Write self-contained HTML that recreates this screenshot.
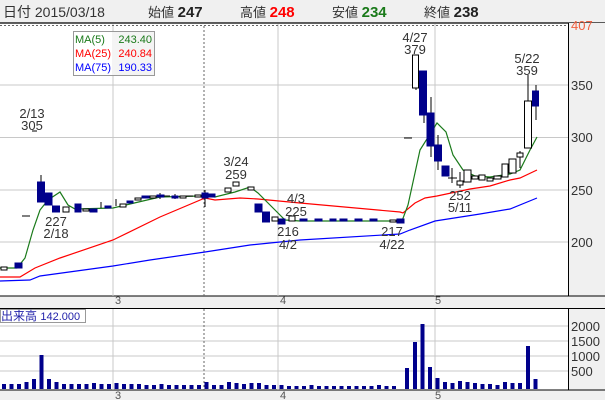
<!DOCTYPE html>
<html><head><meta charset="utf-8"><style>
body{margin:0;width:605px;height:400px;overflow:hidden;background:#fff;font-family:"Liberation Sans","Noto Sans CJK JP",sans-serif}
svg text{font-family:"Liberation Sans","Noto Sans CJK JP",sans-serif}
</style></head><body>
<svg width="605" height="400" xmlns="http://www.w3.org/2000/svg">
<rect x="0" y="0" width="605" height="23" fill="#f0f0f0"/>
<line x1="0" y1="23" x2="605" y2="23" stroke="#000" stroke-width="1.2"/>
<text x="3" y="17" font-size="14" fill="#333">日付 2015/03/18</text>
<text x="148" y="17" font-size="13" fill="#333">始値 <tspan font-weight="bold" font-size="15" fill="#222">247</tspan></text>
<text x="240" y="17" font-size="13" fill="#333">高値 <tspan font-weight="bold" font-size="15" fill="#f00">248</tspan></text>
<text x="332" y="17" font-size="13" fill="#333">安値 <tspan font-weight="bold" font-size="15" fill="#1a7a1a">234</tspan></text>
<text x="424" y="17" font-size="13" fill="#333">終値 <tspan font-weight="bold" font-size="15" fill="#222">238</tspan></text>
<rect x="569" y="23" width="36" height="377" fill="#f0f0f0"/>
<line x1="568.5" y1="23" x2="568.5" y2="390" stroke="#000"/>
<rect x="0" y="296" width="605" height="13" fill="#f0f0f0"/>
<line x1="0" y1="296" x2="605" y2="296" stroke="#000"/>
<line x1="0" y1="308.5" x2="605" y2="308.5" stroke="#000"/>
<rect x="0" y="390" width="605" height="10" fill="#f0f0f0"/>
<line x1="0" y1="390" x2="605" y2="390" stroke="#000"/>
<g font-size="11" fill="#555"><text x="115" y="304">3</text><text x="280" y="304">4</text><text x="435" y="304">5</text>
<text x="115" y="399">3</text><text x="280" y="399">4</text><text x="435" y="399">5</text></g>
<g stroke="#c8c8c8" stroke-width="1">
<line x1="0" y1="85" x2="568" y2="85"/><line x1="0" y1="137.5" x2="568" y2="137.5"/><line x1="0" y1="190" x2="568" y2="190"/><line x1="0" y1="242" x2="568" y2="242"/>
<line x1="113" y1="24" x2="113" y2="296"/><line x1="278" y1="24" x2="278" y2="296"/><line x1="435" y1="24" x2="435" y2="296"/>
<line x1="113" y1="309" x2="113" y2="390"/><line x1="278" y1="309" x2="278" y2="390"/><line x1="435" y1="309" x2="435" y2="390"/>
<line x1="0" y1="326" x2="568" y2="326"/><line x1="0" y1="341" x2="568" y2="341"/><line x1="0" y1="356" x2="568" y2="356"/><line x1="0" y1="371" x2="568" y2="371"/>
</g>
<g stroke="#666" stroke-dasharray="2,2"><line x1="0" y1="25.5" x2="568" y2="25.5"/><line x1="204" y1="26" x2="204" y2="296"/><line x1="204" y1="309" x2="204" y2="390"/></g>
<g font-size="13" fill="#333"><text x="571" y="30" fill="#f06040">407</text><text x="571" y="90">350</text><text x="571" y="142">300</text><text x="571" y="195">250</text><text x="571" y="247">200</text>
<text x="571" y="331">2000</text><text x="571" y="346">1500</text><text x="571" y="361">1000</text><text x="571" y="376">500</text></g>
<polyline fill="none" stroke="#00f" stroke-width="1.2" points="0,281 30,280 40,276 113,266 150,260 205,252 250,245 280,242 300,240 400,234 410,230 435,221 480,214 510,209 537,198"/>
<polyline fill="none" stroke="#f00" stroke-width="1.2" points="0,277 20,277 35,268 60,258 113,240 160,217 205,198 215,200 240,198 258,199 300,203 400,212 403,213 415,203 425,198 437,196 470,189 490,186 510,180 520,178 537,170"/>
<polyline fill="none" stroke="#1a7a1a" stroke-width="1.2" points="0,268 17,268 25,258 33,230 40,210 48,200 60,192 68,205 75,209 113,208 130,204 160,197 200,196 215,197 235,192 250,187 258,193 275,210 285,220 300,221 402,221 408,205 420,150 437,123 446,132 453,155 463,170 475,176 490,177 510,174 520,170 530,150 537,137"/>
<g stroke="#000" stroke-width="1">
<line x1="41" y1="175" x2="41" y2="202"/><line x1="205" y1="190" x2="205" y2="207"/><line x1="424" y1="71" x2="424" y2="123"/><line x1="431" y1="97" x2="431" y2="157"/><line x1="438" y1="135" x2="438" y2="170"/><line x1="452" y1="168" x2="452" y2="183"/><line x1="460" y1="172" x2="460" y2="188"/><line x1="520" y1="151" x2="520" y2="168"/><line x1="528" y1="75" x2="528" y2="148"/><line x1="536" y1="85" x2="536" y2="120"/><line x1="416" y1="55" x2="416" y2="90"/>
<line x1="101" y1="202" x2="101" y2="208"/><line x1="116" y1="199" x2="116" y2="206"/><line x1="160" y1="193" x2="160" y2="199"/><line x1="175" y1="194" x2="175" y2="199"/>
</g>
<g fill="#00008b" stroke="#00008b">
<rect x="15" y="263" width="7" height="5"/><rect x="37.5" y="182" width="7" height="20"/><rect x="45" y="193" width="7" height="12"/><rect x="52.5" y="206" width="7" height="6"/><rect x="75" y="204" width="6" height="8"/><rect x="90" y="209" width="7" height="3"/>
<rect x="202" y="193" width="6" height="5"/><rect x="209" y="194" width="6" height="3"/><rect x="255" y="204" width="7" height="8"/><rect x="262.5" y="212" width="7" height="10"/><rect x="278" y="219" width="7" height="5"/>
<rect x="397" y="219" width="7" height="4"/><rect x="419.5" y="71" width="7" height="44"/><rect x="427" y="113" width="7" height="33"/><rect x="434.5" y="145" width="7" height="16"/><rect x="442" y="166" width="7" height="10"/><rect x="532.5" y="91" width="6" height="15"/>
<rect x="105" y="206" width="6" height="2"/><rect x="127" y="201" width="6" height="2"/><rect x="142" y="196" width="7" height="2"/><rect x="157" y="195" width="7" height="2"/><rect x="172" y="196" width="6" height="2"/><rect x="300" y="219" width="7" height="2"/><rect x="315" y="219" width="7" height="2"/><rect x="340" y="219" width="7" height="2"/><rect x="355" y="219" width="7" height="2"/><rect x="370" y="219" width="7" height="2"/><rect x="330" y="219" width="6" height="2"/>
</g>
<g fill="#fff" stroke="#000">
<rect x="1" y="267" width="6" height="3"/><rect x="63" y="207" width="6" height="5"/><rect x="83" y="209" width="6" height="2"/><rect x="120" y="204" width="6" height="3"/><rect x="135" y="198" width="6" height="2"/><rect x="150" y="196" width="6" height="2"/><rect x="180" y="196" width="6" height="2"/><rect x="195" y="195" width="6" height="2"/><rect x="225" y="188" width="6" height="4"/><rect x="233" y="182" width="6" height="4"/><rect x="248" y="187" width="6" height="3"/><rect x="272" y="217" width="6" height="4"/><rect x="289" y="216" width="6" height="5"/><rect x="390" y="220" width="6" height="2"/>
<rect x="412.5" y="55" width="6" height="33"/><rect x="457" y="181" width="6" height="4"/><rect x="464" y="170" width="7" height="12"/><rect x="472" y="176" width="6" height="3"/><rect x="479" y="175" width="6" height="5"/><rect x="487" y="178" width="6" height="3"/><rect x="494" y="176" width="7" height="3"/><rect x="502" y="164" width="6" height="13"/><rect x="509" y="159" width="7" height="14"/><rect x="517" y="153" width="6" height="4"/><rect x="524.5" y="101" width="7" height="47"/>
</g>
<g stroke="#000"><line x1="404" y1="138" x2="412" y2="138"/><line x1="22" y1="216" x2="30" y2="216"/><line x1="32" y1="131" x2="37" y2="131"/><line x1="448" y1="178" x2="457" y2="178"/><line x1="186" y1="196" x2="193" y2="196"/><line x1="164" y1="196" x2="170" y2="196"/></g>
<g font-size="13" fill="#333" text-anchor="middle">
<text x="32" y="118">2/13</text><text x="32" y="130">305</text>
<text x="56" y="226">227</text><text x="56" y="238">2/18</text>
<text x="236" y="166">3/24</text><text x="236" y="179">259</text>
<text x="296" y="203">4/3</text><text x="296" y="216">225</text>
<text x="288" y="236">216</text><text x="288" y="249">4/2</text>
<text x="392" y="236">217</text><text x="392" y="249">4/22</text>
<text x="415" y="42">4/27</text><text x="415" y="54">379</text>
<text x="527" y="63">5/22</text><text x="527" y="75">359</text>
<text x="460" y="200">252</text><text x="460" y="212">5/11</text>
</g>
<rect x="73.5" y="31.5" width="81" height="44" fill="#f4f4f4" stroke="#999"/>
<rect x="74" y="32" width="38" height="43" fill="#fff"/>
<g font-size="11"><text x="75" y="43" fill="#1a7a1a">MA(5)</text><text x="152" y="43" fill="#1a7a1a" text-anchor="end">243.40</text>
<text x="75" y="57" fill="#f00">MA(25)</text><text x="152" y="57" fill="#f00" text-anchor="end">240.84</text>
<text x="75" y="71" fill="#00f">MA(75)</text><text x="152" y="71" fill="#00f" text-anchor="end">190.33</text></g>
<rect x="0.5" y="309.5" width="85" height="13" fill="#fff" stroke="#999"/>
<text x="1" y="320" font-size="12" fill="#22a">出来高 <tspan font-size="11">142.000</tspan></text>
<g fill="#00008b">
<rect x="2" y="384" width="4" height="5"/><rect x="9.5" y="384" width="4" height="5"/><rect x="17" y="384" width="4" height="5"/><rect x="24.5" y="382" width="4" height="7"/><rect x="32" y="379" width="4" height="10"/><rect x="39.5" y="355" width="4" height="34"/><rect x="47" y="379" width="4" height="10"/><rect x="54.5" y="382" width="4" height="7"/><rect x="62" y="384" width="4" height="5"/><rect x="69.5" y="384" width="4" height="5"/><rect x="77" y="384" width="4" height="5"/><rect x="84.5" y="384" width="4" height="5"/><rect x="92" y="383" width="4" height="6"/><rect x="99.5" y="384" width="4" height="5"/><rect x="107" y="384" width="4" height="5"/><rect x="114.5" y="383" width="4" height="6"/><rect x="122" y="384" width="4" height="5"/><rect x="129.5" y="384" width="4" height="5"/><rect x="137" y="384" width="4" height="5"/><rect x="144.5" y="385" width="4" height="4"/><rect x="152" y="385" width="4" height="4"/><rect x="159.5" y="384" width="4" height="5"/><rect x="167" y="385" width="4" height="4"/><rect x="174.5" y="385" width="4" height="4"/><rect x="182" y="385" width="4" height="4"/><rect x="189.5" y="385" width="4" height="4"/><rect x="197" y="385" width="4" height="4"/><rect x="204.5" y="382" width="4" height="7"/><rect x="212" y="385" width="4" height="4"/><rect x="219.5" y="385" width="4" height="4"/><rect x="227" y="382" width="4" height="7"/><rect x="234.5" y="383" width="4" height="6"/><rect x="242" y="384" width="4" height="5"/><rect x="249.5" y="383" width="4" height="6"/><rect x="257" y="383" width="4" height="6"/><rect x="264.5" y="385" width="4" height="4"/><rect x="272" y="385" width="4" height="4"/><rect x="279.5" y="385" width="4" height="4"/><rect x="287" y="386" width="4" height="3"/><rect x="294.5" y="386" width="4" height="3"/><rect x="302" y="386" width="4" height="3"/><rect x="309.5" y="385" width="4" height="4"/><rect x="317" y="386" width="4" height="3"/><rect x="324.5" y="386" width="4" height="3"/><rect x="332" y="386" width="4" height="3"/><rect x="339.5" y="386" width="4" height="3"/><rect x="347" y="386" width="4" height="3"/><rect x="354.5" y="386" width="4" height="3"/><rect x="362" y="386" width="4" height="3"/><rect x="369.5" y="386" width="4" height="3"/><rect x="377" y="385" width="4" height="4"/><rect x="384.5" y="386" width="4" height="3"/><rect x="392" y="386" width="4" height="3"/>
<rect x="405" y="368" width="4" height="21"/><rect x="413" y="342" width="4" height="47"/><rect x="420.5" y="324" width="4" height="65"/><rect x="428" y="367" width="4" height="22"/><rect x="435.5" y="378" width="4" height="11"/><rect x="443" y="382" width="4" height="7"/><rect x="450.5" y="383" width="4" height="6"/><rect x="458" y="381" width="4" height="8"/><rect x="465.5" y="382" width="4" height="7"/><rect x="473" y="383" width="4" height="6"/><rect x="480.5" y="384" width="4" height="5"/><rect x="488" y="384" width="4" height="5"/><rect x="495.5" y="385" width="4" height="4"/><rect x="503" y="382" width="4" height="7"/><rect x="510.5" y="383" width="4" height="6"/><rect x="518" y="383" width="4" height="6"/><rect x="526" y="346" width="4" height="43"/><rect x="533.5" y="379" width="4" height="10"/>
</g>
</svg>
</body></html>
